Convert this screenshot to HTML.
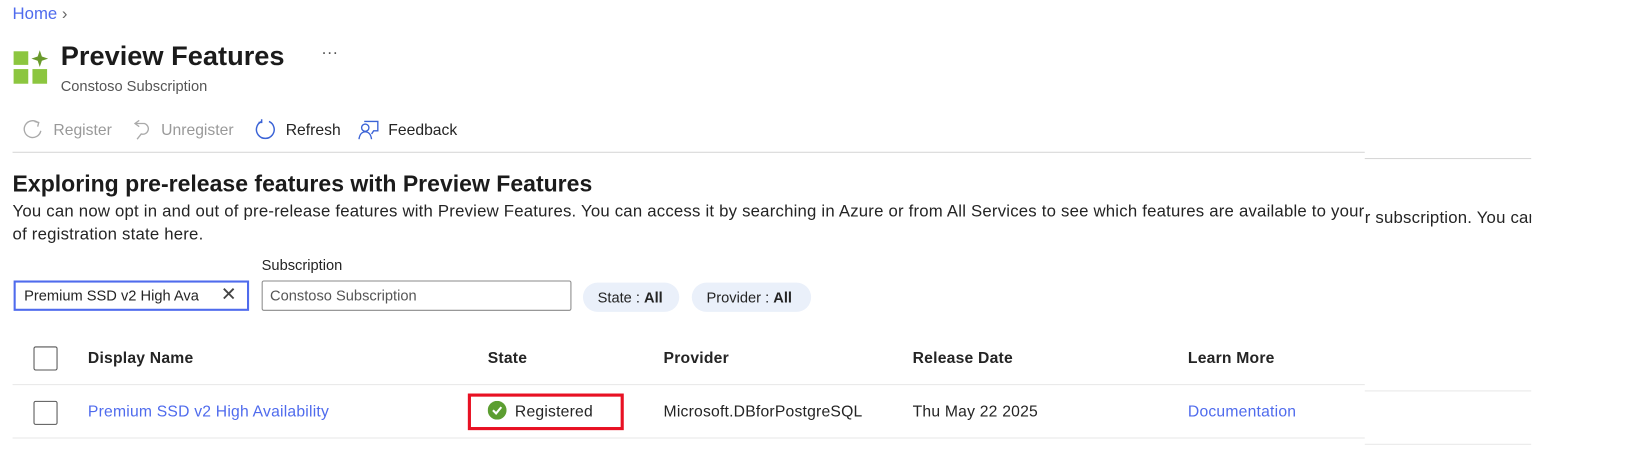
<!DOCTYPE html><html><head><style>
body{margin:0;width:1641px;height:476px;background:#fff;font-family:"Liberation Sans",sans-serif;color:#242424;position:relative;overflow:hidden}
#w{position:absolute;left:0;top:0;width:1568px;height:455px;transform:scale(1.0466);transform-origin:0 0}
.a{position:absolute;white-space:nowrap}
.ln{position:absolute;height:1px;background:#d6d6d6}
.cb{position:absolute;width:23px;height:23px;border:1px solid #555;border-radius:2px;box-sizing:border-box}
.pill{position:absolute;height:28px;border-radius:14px;background:#eaf0fa;font-size:14px;line-height:28px;padding:0 14px;box-sizing:border-box}
.t{font-size:15px;letter-spacing:0.2px}
</style></head><body><div id="w">
<div class="a" style="left:12px;top:5px;font-size:16px;color:#4f6bed">Home <span style="color:#666">›</span></div>
<svg class="a" style="left:12px;top:47px" width="36" height="36" viewBox="0 0 36 36"><rect x="1" y="2" width="14" height="13" fill="#8cc63f"/><rect x="1" y="19" width="14" height="14" fill="#8cc63f"/><rect x="19" y="19" width="14" height="14" fill="#8cc63f"/><path d="M26 1 L28 7 L34 9 L28 11 L26 17 L24 11 L18 9 L24 7Z" fill="#6a9a2c"/></svg>
<div class="a" style="left:58px;top:38px;font-size:26px;font-weight:bold;color:#1b1b1b">Preview Features</div>
<div class="a" style="left:307px;top:42px;font-size:16px;color:#555">···</div>
<div class="a" style="left:58px;top:74px;font-size:14px;color:#555">Constoso Subscription</div>
<svg class="a" style="left:22px;top:114px" width="20" height="20"><path d="M14 3 A8 8 0 1 0 17 11" fill="none" stroke="#aaa" stroke-width="1.3"/><path d="M11 2 L15 3 L14 7" fill="none" stroke="#aaa" stroke-width="1.3"/></svg>
<div class="a" style="left:51px;top:116px;font-size:15px;color:#999">Register</div>
<svg class="a" style="left:125px;top:114px" width="20" height="20"><path d="M5 4 L13 4 A5 5 0 0 1 10 14 L6 19" fill="none" stroke="#aaa" stroke-width="1.3"/><path d="M8 1 L4 4 L8 7" fill="none" stroke="#aaa" stroke-width="1.3"/></svg>
<div class="a" style="left:154px;top:116px;font-size:15px;color:#999">Unregister</div>
<svg class="a" style="left:243px;top:113px" width="22" height="22"><path d="M14 3 A8.5 8.5 0 1 1 7 3" fill="none" stroke="#3b63d6" stroke-width="1.4"/><path d="M7 1 L7 4 L4 4" fill="none" stroke="#3b63d6" stroke-width="1.4"/></svg>
<div class="a" style="left:273px;top:116px;font-size:15px">Refresh</div>
<svg class="a" style="left:341px;top:113px" width="22" height="22"><circle cx="8" cy="9" r="3.5" fill="none" stroke="#3b63d6" stroke-width="1.3"/><path d="M2 20 Q3 13 8 13 Q13 13 14 20" fill="none" stroke="#3b63d6" stroke-width="1.3"/><path d="M7 3 L20 3 L20 12 L16 12 L14 15" fill="none" stroke="#3b63d6" stroke-width="1.3"/></svg>
<div class="a" style="left:371px;top:116px;font-size:15px">Feedback</div>
<div class="ln" style="left:12px;top:145px;width:1292px"></div>
<div class="ln" style="left:1304px;top:151px;width:159px"></div>
<div class="a" style="left:12px;top:163px;font-size:22px;font-weight:bold;color:#1b1b1b">Exploring pre-release features with Preview Features</div>
<div class="a" style="left:12px;top:194px;font-size:16px;letter-spacing:0.2px;width:1292px;overflow:hidden">You can now opt in and out of pre-release features with Preview Features. You can access it by searching in Azure or from All Services to see which features are available to your</div>
<div class="a" style="left:1304px;top:200px;font-size:16px;letter-spacing:0.2px;width:159px;overflow:hidden">r subscription. You can</div>
<div class="a" style="left:12px;top:216px;font-size:16px;letter-spacing:0.2px">of registration state here.</div>
<div class="a" style="left:250px;top:245px;font-size:14px">Subscription</div>
<div class="a" style="left:13px;top:268px;width:225px;height:29px;border:2px solid #4f6bed;box-sizing:border-box;font-size:14px;line-height:25px;padding-left:8px">Premium SSD v2 High Ava<span style="position:absolute;right:10px;top:-1px;font-size:18px;color:#444">✕</span></div>
<div class="a" style="left:250px;top:268px;width:296px;height:29px;border:1px solid #8a8a8a;border-radius:2px;box-sizing:border-box;font-size:14px;line-height:27px;padding-left:7px;color:#555">Constoso Subscription</div>
<div class="pill" style="left:557px;top:270px;width:92px">State : <b>All</b></div>
<div class="pill" style="left:661px;top:270px;width:114px">Provider : <b>All</b></div>
<div class="cb" style="left:32px;top:331px"></div>
<div class="a t" style="left:84px;top:334px;font-weight:bold">Display Name</div>
<div class="a t" style="left:466px;top:334px;font-weight:bold">State</div>
<div class="a t" style="left:634px;top:334px;font-weight:bold">Provider</div>
<div class="a t" style="left:872px;top:334px;font-weight:bold">Release Date</div>
<div class="a t" style="left:1135px;top:334px;font-weight:bold">Learn More</div>
<div class="ln" style="left:12px;top:367px;width:1292px;background:#e8e8e8"></div>
<div class="ln" style="left:1304px;top:373px;width:159px;background:#e8e8e8"></div>
<div class="cb" style="left:32px;top:383px"></div>
<div class="a t" style="left:84px;top:385px;color:#4f6bed">Premium SSD v2 High Availability</div>
<div class="a" style="left:447px;top:376px;width:149px;height:35px;border:3px solid #e81123;box-sizing:border-box"></div>
<svg class="a" style="left:466px;top:383px" width="18" height="18"><circle cx="9" cy="9" r="9" fill="#5c9e31"/><path d="M5 9 L8 12 L13 6" fill="none" stroke="#fff" stroke-width="2"/></svg>
<div class="a t" style="left:492px;top:385px">Registered</div>
<div class="a t" style="left:634px;top:385px">Microsoft.DBforPostgreSQL</div>
<div class="a t" style="left:872px;top:385px">Thu May 22 2025</div>
<div class="a t" style="left:1135px;top:385px;color:#4f6bed">Documentation</div>
<div class="ln" style="left:12px;top:418px;width:1292px;background:#e8e8e8"></div>
<div class="ln" style="left:1304px;top:424px;width:159px;background:#e8e8e8"></div>
</div></body></html>
